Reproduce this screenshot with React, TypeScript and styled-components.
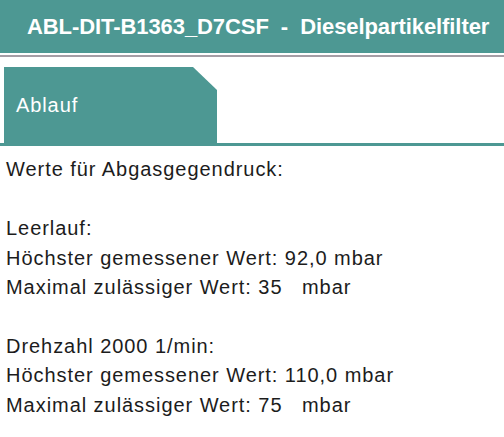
import React from "react";
import styled, { createGlobalStyle } from "styled-components";

const teal = "#4d9893";

const GlobalStyle = createGlobalStyle`
  html, body {
    margin: 0;
    padding: 0;
    background: #ffffff;
    font-family: "Liberation Sans", Arial, sans-serif;
  }
`;

const Page = styled.div`
  width: 504px;
  display: flex;
  flex-direction: column;
`;

const Header = styled.div`
  height: 53px;
  display: flex;
  align-items: center;
  padding-left: 27px;
  background: ${teal};
  color: #ffffff;
  font-size: 22px;
  font-weight: bold;
  letter-spacing: -0.08px;
  white-space: pre;
`;

const Divider = styled.div`
  margin-top: 2px;
  height: 2px;
  background: #a59ea6;
`;

const TabBar = styled.div`
  display: flex;
  align-items: flex-end;
  padding: 10px 0 0 4px;
  border-bottom: 3px solid ${teal};
`;

const Tab = styled.div`
  width: 213px;
  height: 76px;
  display: flex;
  align-items: center;
  padding-left: 12px;
  box-sizing: border-box;
  background: ${teal};
  color: #ffffff;
  font-size: 20px;
  letter-spacing: 0.9px;
  clip-path: polygon(0 0, 189px 0, 100% 23px, 100% 100%, 0 100%);
`;

const Content = styled.div`
  padding: 9px 0 0 6px;
  color: #1c1c1c;
  font-size: 20px;
  line-height: 29.3px;
  letter-spacing: 0.95px;
  white-space: pre;
`;

const Line = styled.div<{ $gapBefore?: boolean }>`
  margin-top: ${(p) => (p.$gapBefore ? "30px" : "0")};
`;

const App = (): JSX.Element => {
  return (
    <Page>
      <GlobalStyle />
      <Header>ABL-DIT-B1363_D7CSF  -  Dieselpartikelfilter</Header>
      <Divider />
      <TabBar>
        <Tab>Ablauf</Tab>
      </TabBar>
      <Content>
        <Line>Werte für Abgasgegendruck:</Line>
        <Line $gapBefore>Leerlauf:</Line>
        <Line>Höchster gemessener Wert: 92,0 mbar</Line>
        <Line>Maximal zulässiger Wert: 35   mbar</Line>
        <Line $gapBefore>Drehzahl 2000 1/min:</Line>
        <Line>Höchster gemessener Wert: 110,0 mbar</Line>
        <Line>Maximal zulässiger Wert: 75   mbar</Line>
      </Content>
    </Page>
  );
};

export default App;
